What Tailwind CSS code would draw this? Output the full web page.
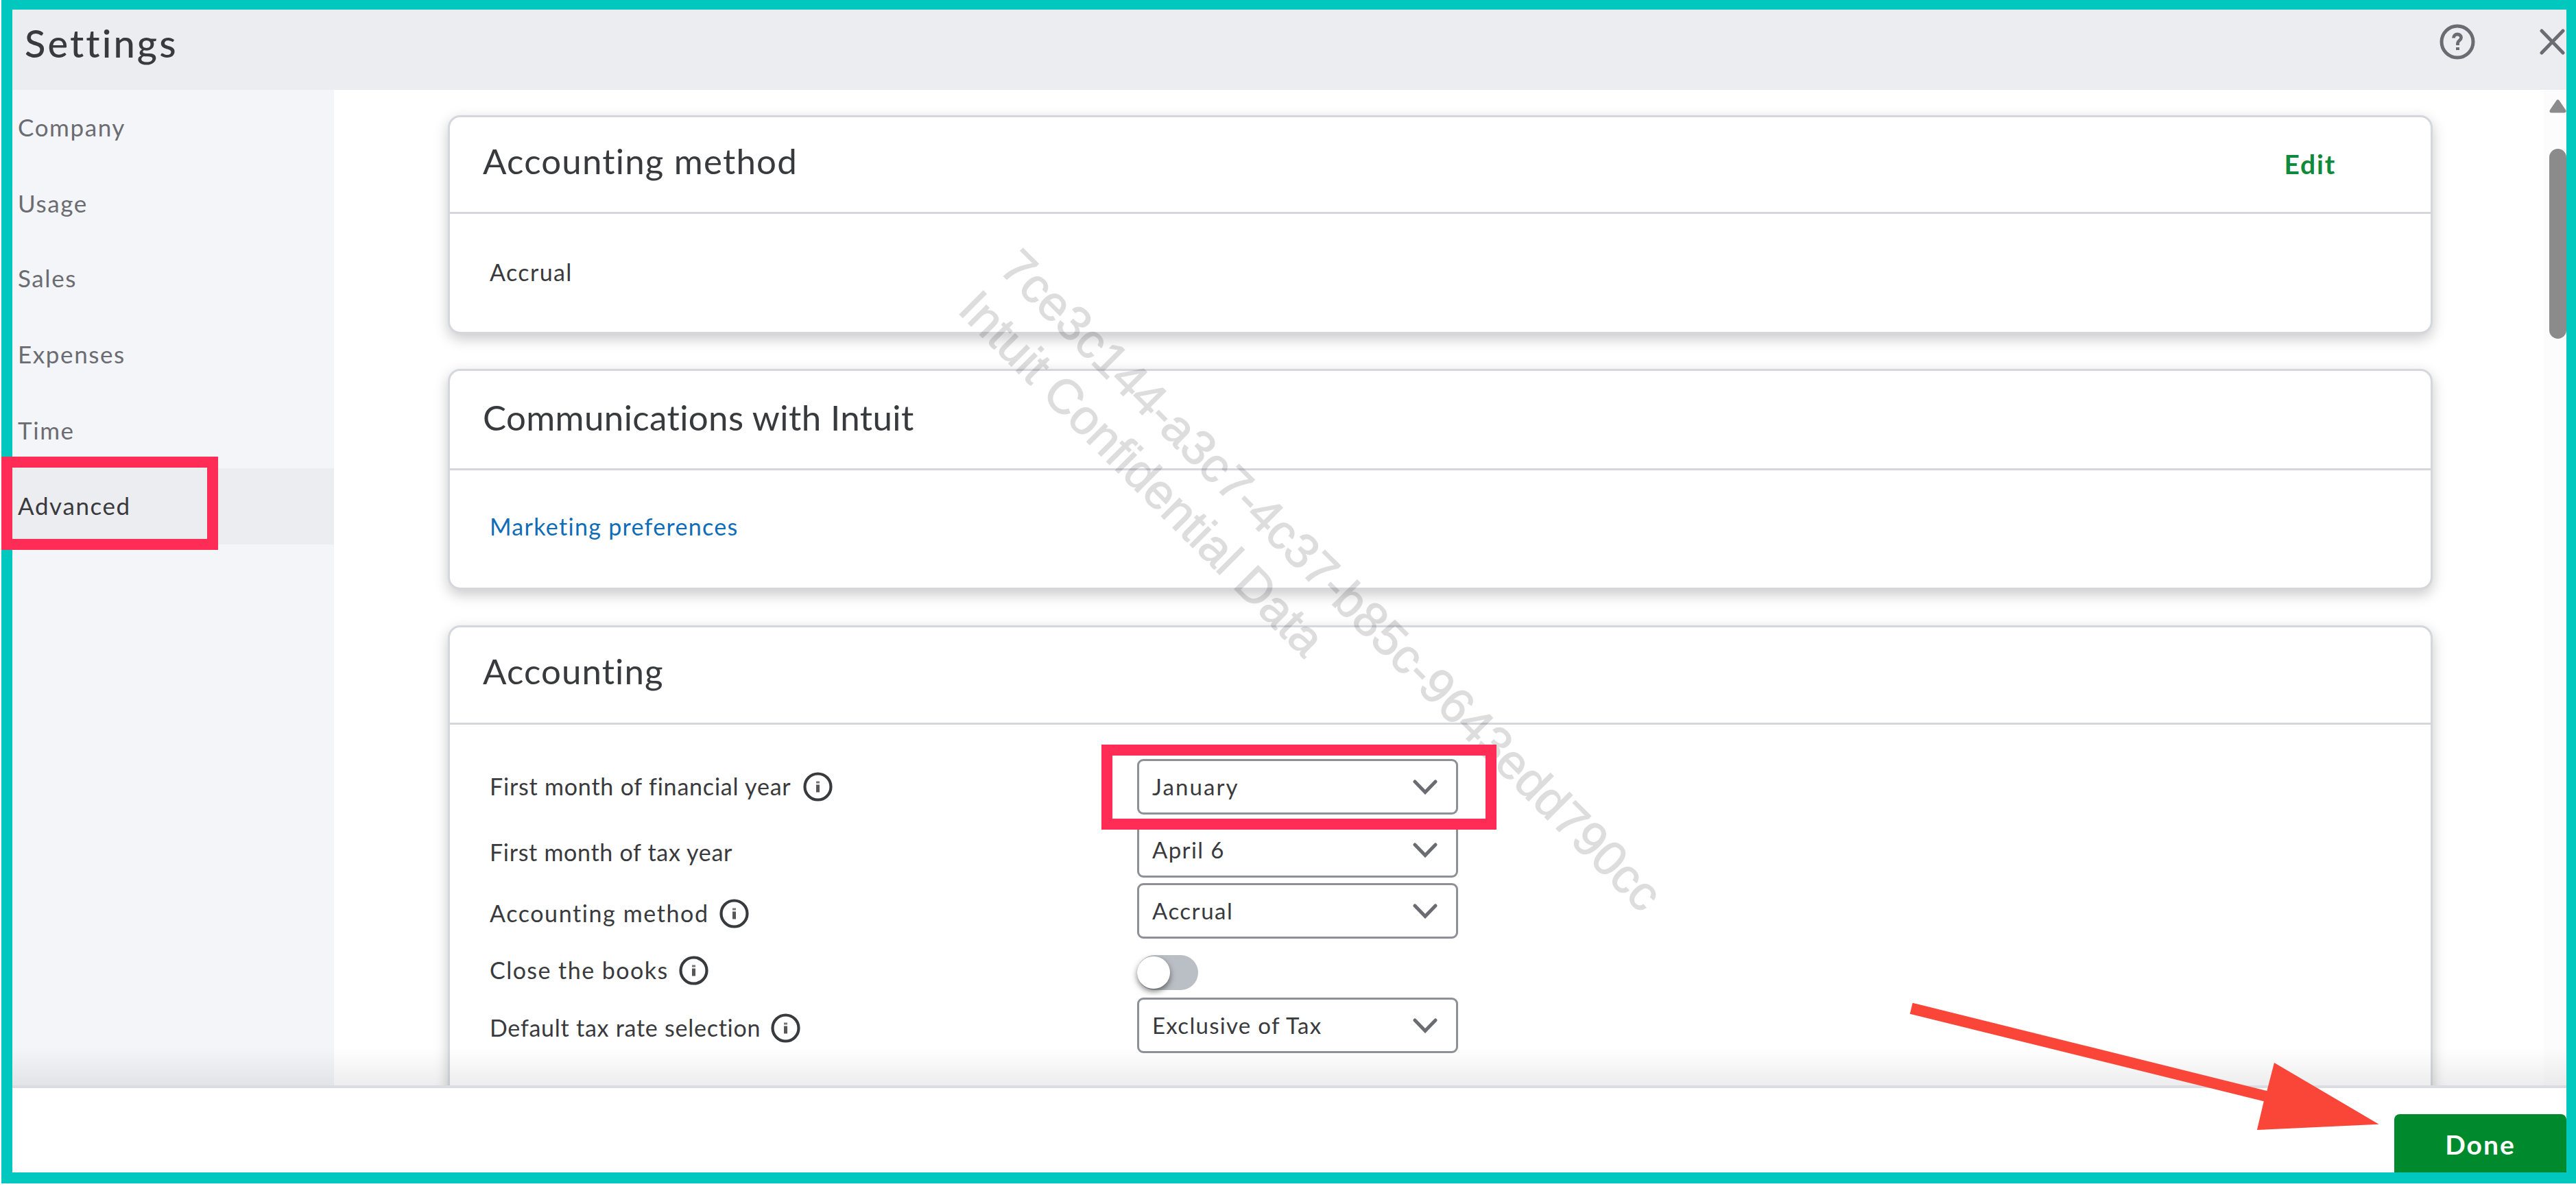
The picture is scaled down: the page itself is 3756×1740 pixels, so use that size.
<!DOCTYPE html>
<html lang="en">
<head>
  <meta charset="UTF-8" />
  <title>Settings</title>

  <!-- Tailwind CSS -->
  <script src="https://cdn.jsdelivr.net/npm/@tailwindcss/browser@4"></script>
</head>

<body class="w-[3756px] h-[1740px] overflow-hidden bg-white font-['Lato','Open_Sans',sans-serif] text-[#393a3d]">
<div class="relative w-[3756px] h-[1740px] overflow-hidden">

  <div class="ml-[2px] w-[3754px] h-[1726px] flex flex-col border-t-[14px] border-l-[16px] border-r-[14px] border-b-[16px] border-[#00c8be]">

    <!-- Header -->
    <header class="h-[117px] shrink-0 flex items-center justify-between bg-[#ecedf1] pl-[18px] pb-6">
      <h1 class="text-[56px] leading-none font-medium tracking-[3.1px] pt-1">Settings</h1>
      <div class="flex items-center gap-[94px] pr-[2px] text-[#6b6c72]">
        <svg class="w-[52px] h-[52px]" viewBox="0 0 52 52" fill="none" stroke="currentColor">
          <circle cx="26" cy="26" r="23" stroke-width="5" />
          <path d="M20.5 20.500c0-3.600 2.400-5.500 5.500-5.500s5.500 2 5.500 5c0 4-5 4-5 8v3" stroke-width="4.800" />
          <path d="M26.500 34v4" stroke-width="5" />
        </svg>
        <svg class="w-[37px] h-[38px]" viewBox="0 0 37 38" fill="none" stroke="currentColor" stroke-width="5" stroke-linecap="round">
          <path d="M3 3l31 32M34 3L3 35" />
        </svg>
      </div>
    </header>

    <!-- Main -->
    <div class="relative h-[1452px] shrink-0 flex overflow-hidden">
      <nav class="w-[469px] shrink-0 bg-[#f3f5f9] text-[35px] leading-none tracking-[1.600px] text-[#6b6c72]">
        <a class="h-[110.400px] flex items-center pl-[8px] pb-[2px]">Company</a>
        <a class="h-[110.400px] flex items-center pl-[8px] pb-px">Usage</a>
        <a class="h-[110.400px] flex items-center pl-[8px] pb-[2px]">Sales</a>
        <a class="h-[110.400px] flex items-center pl-[8px] pb-px">Expenses</a>
        <a class="h-[110.400px] flex items-center pl-[8px]">Time</a>
        <a class="h-[111px] flex items-center pl-[8px] pb-[2px] bg-[#ecedf1] text-[#393a3d]">Advanced</a>
      </nav>

      <main class="flex-1 flex flex-col pl-[166px] pt-[37px]">
        <section class="w-[2894px] h-[319px] shrink-0 flex flex-col bg-white border-[3px] border-[#d4d7dc] rounded-[18px] shadow-[0_7px_20px_rgba(0,0,0,0.22)]">
          <div class="h-[141px] shrink-0 flex items-center justify-between border-b-[3px] border-[#d4d7dc] pl-[48px] pr-[138px]">
            <h2 class="text-[51px] leading-none tracking-[1.200px] pb-[11px]">Accounting method</h2>
            <button class="text-[39px] leading-none font-bold tracking-[1.800px] text-[#108a3a] pb-[2px]">Edit</button>
          </div>
          <div class="flex-1 flex items-center pl-[58px] pb-[2px]">
            <p class="text-[34px] leading-none tracking-[1.400px]">Accrual</p>
          </div>
        </section>

        <section class="mt-[51px] w-[2894px] h-[322px] shrink-0 flex flex-col bg-white border-[3px] border-[#d4d7dc] rounded-[18px] shadow-[0_7px_20px_rgba(0,0,0,0.22)]">
          <div class="h-[145px] shrink-0 flex items-center border-b-[3px] border-[#d4d7dc] pl-[48px]">
            <h2 class="text-[51px] leading-none tracking-[0.400px] pb-2">Communications with Intuit</h2>
          </div>
          <div class="flex-1 flex items-center pl-[58px] pb-[7px]">
            <a class="text-[34px] leading-none tracking-[1.300px] text-[#0f6cb6]">Marketing preferences</a>
          </div>
        </section>

        <section class="mt-[52px] w-[2894px] h-[800px] shrink-0 bg-white border-[3px] border-[#d4d7dc] rounded-[18px] shadow-[0_7px_20px_rgba(0,0,0,0.22)]">
          <div class="h-[142px] flex items-center border-b-[3px] border-[#d4d7dc] pl-[48px]">
            <h2 class="text-[51px] leading-none tracking-[1.100px] pb-3">Accounting</h2>
          </div>
          <div class="pt-[50px] pl-[58px] text-[34px] leading-none">
            <div class="h-[81px] flex items-center">
              <div class="w-[944px] flex items-center gap-[17px]">
                <span class="tracking-[0.800px] pb-[2px]">First month of financial year</span>
                <svg class="w-[43px] h-[43px]" viewBox="0 0 43 43" fill="none" stroke="currentColor"><circle cx="21.500" cy="21.500" r="19" stroke-width="4.200" /><path d="M21.500 13.500v3" stroke-width="5" stroke-opacity="0.700" /><path d="M21.500 18.500v11" stroke-width="5" stroke-opacity="0.850" /></svg>
              </div>
              <div class="w-[468px] h-[81px] flex items-center justify-between border-[3px] border-[#8d9096] rounded-[9px] pl-[19px] pr-[27px]">
                <span class="text-[33px] tracking-[2.100px]">January</span>
                <svg class="w-[36px] h-[22px]" viewBox="0 0 36 22" fill="none" stroke="#6b6c72" stroke-width="5" stroke-linecap="round"><path d="M3 3l15 15.500L33 3" /></svg>
              </div>
            </div>
            <div class="mt-[11px] h-[81px] flex items-center">
              <div class="w-[944px] flex items-center">
                <span class="tracking-[0.700px] pt-[6px]">First month of tax year</span>
              </div>
              <div class="w-[468px] h-[81px] flex items-center justify-between border-[3px] border-[#8d9096] rounded-[9px] pl-[19px] pr-[27px]">
                <span class="text-[33px] tracking-[1.400px]">April 6</span>
                <svg class="w-[36px] h-[22px]" viewBox="0 0 36 22" fill="none" stroke="#6b6c72" stroke-width="5" stroke-linecap="round"><path d="M3 3l15 15.500L33 3" /></svg>
              </div>
            </div>
            <div class="mt-2 h-[81px] flex items-center">
              <div class="w-[944px] flex items-center gap-[15px] pt-2">
                <span class="tracking-[1.600px] pb-[2px]">Accounting method</span>
                <svg class="w-[43px] h-[43px]" viewBox="0 0 43 43" fill="none" stroke="currentColor"><circle cx="21.500" cy="21.500" r="19" stroke-width="4.200" /><path d="M21.500 13.500v3" stroke-width="5" stroke-opacity="0.700" /><path d="M21.500 18.500v11" stroke-width="5" stroke-opacity="0.850" /></svg>
              </div>
              <div class="w-[468px] h-[81px] flex items-center justify-between border-[3px] border-[#8d9096] rounded-[9px] pl-[19px] pr-[27px]">
                <span class="text-[33px] tracking-[1.500px]">Accrual</span>
                <svg class="w-[36px] h-[22px]" viewBox="0 0 36 22" fill="none" stroke="#6b6c72" stroke-width="5" stroke-linecap="round"><path d="M3 3l15 15.500L33 3" /></svg>
              </div>
            </div>
            <div class="h-[86px] flex items-center">
              <div class="w-[944px] flex items-center gap-[15px] pt-[7px]">
                <span class="tracking-[1.450px] pb-[2px]">Close the books</span>
                <svg class="w-[43px] h-[43px]" viewBox="0 0 43 43" fill="none" stroke="currentColor"><circle cx="21.500" cy="21.500" r="19" stroke-width="4.200" /><path d="M21.500 13.500v3" stroke-width="5" stroke-opacity="0.700" /><path d="M21.500 18.500v11" stroke-width="5" stroke-opacity="0.850" /></svg>
              </div>
              <div class="mt-[13px] w-[89px] h-[51px] flex items-center rounded-full bg-[#babec5]">
                <div class="w-[48px] h-[47px] rounded-full bg-white shadow-[0_4px_8px_rgba(0,0,0,0.5)]"></div>
              </div>
            </div>
            <div class="h-[81px] flex items-center">
              <div class="w-[944px] flex items-center gap-[15px] pt-2">
                <span class="tracking-[0.750px] pb-[2px]">Default tax rate selection</span>
                <svg class="w-[43px] h-[43px]" viewBox="0 0 43 43" fill="none" stroke="currentColor"><circle cx="21.500" cy="21.500" r="19" stroke-width="4.200" /><path d="M21.500 13.500v3" stroke-width="5" stroke-opacity="0.700" /><path d="M21.500 18.500v11" stroke-width="5" stroke-opacity="0.850" /></svg>
              </div>
              <div class="w-[468px] h-[81px] flex items-center justify-between border-[3px] border-[#8d9096] rounded-[9px] pl-[19px] pr-[27px]">
                <span class="text-[33px] tracking-[1.300px]">Exclusive of Tax</span>
                <svg class="w-[36px] h-[22px]" viewBox="0 0 36 22" fill="none" stroke="#6b6c72" stroke-width="5" stroke-linecap="round"><path d="M3 3l15 15.500L33 3" /></svg>
              </div>
            </div>
          </div>
        </section>
      </main>

      <!-- Scrollbar -->
      <div class="w-[33px] shrink-0 flex flex-col items-end bg-[#fcfcfc] pt-[14px]">
        <svg class="w-[25px] h-[20px]" viewBox="0 0 25 20"><path d="M12.500 3L22 17H3z" fill="#8b8b8b" stroke="#8b8b8b" stroke-width="5" stroke-linejoin="round" /></svg>
        <div class="mt-[52px] w-[25px] h-[277px] rounded-full bg-[#8b8b8b]"></div>
      </div>

      <!-- Shade over the bottom of the scroll area -->
      <div class="absolute inset-x-0 bottom-0 h-[56px] bg-linear-to-b from-black/0 to-black/7"></div>
    </div>

    <!-- Footer -->
    <footer class="flex-1 flex justify-end border-t-4 border-[#d9dce1] bg-white pt-[38px]">
      <button class="w-[251px] h-[85px] rounded-t-[8px] bg-[#008a2e] text-white text-[39px] leading-none font-bold tracking-[2px] pt-1">Done</button>
    </footer>
  </div>

  <!-- Watermark -->
  <svg class="absolute inset-0 w-[3756px] h-[1740px] font-['Liberation_Sans',Arial,sans-serif] text-[70.900px]" viewBox="0 0 3756 1740" fill="#000000" stroke="#000000" stroke-width="1.200">
    <g transform="translate(1454.5 394) rotate(45)" opacity="0.13">
      <text x="0" y="0">7ce3c144-a3c7-4c37-b85c-9643edd790cc</text>
      <text x="0" y="85">Intuit Confidential Data</text>
    </g>
  </svg>

  <!-- Callouts -->
  <div class="absolute left-[2px] top-[666px] w-[316px] h-[136px] border-16 border-[#ff2d55]"></div>
  <div class="absolute left-[1606px] top-[1086px] w-[576px] h-[124px] border-16 border-[#ff2d55]"></div>
  <svg class="absolute inset-0 w-[3756px] h-[1740px]" viewBox="0 0 3756 1740">
    <path d="M2788.700 1462.700L3305.400 1591L3316 1550L3468.600 1639.700L3290.900 1648L3300.800 1606.300L2784.800 1478.700z" fill="#fa4539" />
  </svg>
</div>
</body>
</html>
